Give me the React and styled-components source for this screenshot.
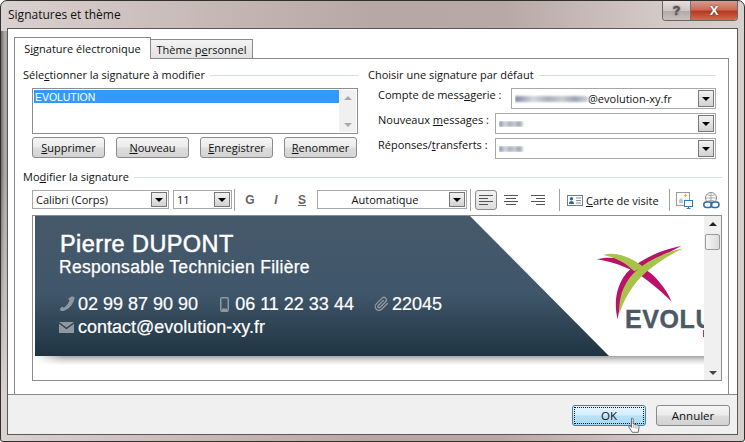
import React from "react";
import styled, { createGlobalStyle } from "styled-components";

const Global = createGlobalStyle`
  html, body { margin: 0; padding: 0; background: #fff; }
  #root { width: 745px; height: 442px; overflow: hidden; }
  * { box-sizing: border-box; }
`;

const Frame = styled.div`
  position: relative;
  width: 745px;
  height: 442px;
  display: flex;
  flex-direction: column;
  padding: 0 6px 6px 6px;
  border: 1px solid #30302e;
  border-radius: 7px 7px 3px 3px;
  background: linear-gradient(90deg, #d9d2d0 0%, #c6b8b5 28%, #b8a8a5 50%, #b9a9a6 68%, #d2c8c6 88%, #d6d0ce 100%);
  font-family: "Open Sans", "Noto Sans", sans-serif;
  font-size: 11px;
  color: #111;
  &::before {
    content: "";
    position: absolute;
    left: 0;
    top: 30px;
    width: 6px;
    height: 360px;
    background: linear-gradient(90deg, #6d6b6b, #b0abaa 60%, #a8a0a0);
    -webkit-mask-image: linear-gradient(180deg, #000 40%, transparent);
    mask-image: linear-gradient(180deg, #000 40%, transparent);
  }
`;

const TitleBar = styled.div`
  height: 27px;
  flex: none;
  display: flex;
  justify-content: space-between;
  align-items: flex-start;
`;

const Title = styled.div`
  padding: 6px 0 0 1px;
  font-size: 12px;
  line-height: 16px;
  color: #111;
`;

const Caption = styled.div`
  display: flex;
  height: 20px;
  border: 1px solid #6d6563;
  border-top: none;
  border-radius: 0 0 4px 4px;
  overflow: hidden;
`;

const CaptionBtn = styled.div`
  width: ${(p) => p.$w}px;
  height: 19px;
  display: flex;
  align-items: center;
  justify-content: center;
  background: ${(p) =>
    p.$close
      ? "linear-gradient(180deg, #d59c90 0%, #cf6a55 45%, #b93a22 55%, #cf6a52 100%)"
      : "linear-gradient(180deg, #e6dedc 0%, #cfc6c4 50%, #b5aaa8 55%, #c9c0be 100%)"};
  border-right: ${(p) => (p.$close ? "none" : "1px solid #7a7270")};
  color: ${(p) => (p.$close ? "#fff" : "#555")};
  font: bold 13px "Liberation Sans", sans-serif;
  text-shadow: 0 0 2px #333;
`;

const Client = styled.div`
  flex: 1;
  display: flex;
  flex-direction: column;
  background: #fff;
  border: 1px solid #5b5756;
`;

const Main = styled.div`
  height: 365px;
  flex: none;
  padding: 8px 0 0 6px;
  display: flex;
  flex-direction: column;
`;

const TabRow = styled.div`
  height: 22px;
  flex: none;
  display: flex;
  align-items: flex-end;
  position: relative;
  z-index: 1;
`;

const Tab = styled.div`
  width: ${(p) => p.$w}px;
  height: ${(p) => (p.$active ? 22 : 20)}px;
  flex: none;
  display: flex;
  align-items: center;
  justify-content: center;
  border: 1px solid #8a8a8a;
  border-left: ${(p) => (p.$active ? "1px solid #8a8a8a" : "none")};
  border-bottom: ${(p) => (p.$active ? "none" : "1px solid #8a8a8a")};
  background: ${(p) => (p.$active ? "#fff" : "linear-gradient(180deg, #f3f3f3, #e2e2e2)")};
  padding-bottom: ${(p) => (p.$active ? 1 : 0)}px;
`;

const Panel = styled.div`
  width: 715px;
  height: 336px;
  margin-top: -1px;
  padding: 8px 0 0 8px;
  border: 1px solid #8a8a8a;
  border-bottom: none;
  display: flex;
  flex-direction: column;
`;

const TopGroups = styled.div`
  display: flex;
  gap: 9px;
`;

const Group = styled.div`
  width: ${(p) => p.$w}px;
  flex: none;
`;

const GroupHead = styled.div`
  height: 16px;
  display: flex;
  align-items: center;
  gap: 5px;
  line-height: 16px;
  white-space: nowrap;
  &::after {
    content: "";
    flex: 1;
    height: 1px;
    background: #d6dfe6;
  }
`;

const Key = styled.span`
  text-decoration: underline;
  text-underline-offset: 1px;
`;

const ListBox = styled.div`
  width: 326px;
  height: 46px;
  margin: 5px 0 0 9px;
  padding: 1px;
  display: flex;
  border: 1px solid #8c8c8c;
  background: #fff;
`;

const ListBody = styled.div`
  flex: 1;
`;

const ListItem = styled.div`
  height: 13px;
  padding-left: 1px;
  background: #3399ff;
  color: #fff;
  line-height: 14px;
  font-family: "Liberation Sans", sans-serif;
  font-size: 10.5px;
  letter-spacing: -0.05px;
`;

const ScrollBar = styled.div`
  width: ${(p) => p.$w}px;
  flex: none;
  display: flex;
  flex-direction: column;
  justify-content: space-between;
  align-items: center;
  padding: 6px 0 5px;
  background: #f0f0f0;
  position: relative;
`;

const ScrollArrow = styled.div`
  width: 0;
  height: 0;
  border-left: 4px solid transparent;
  border-right: 4px solid transparent;
  ${(p) =>
    p.$up
      ? `border-bottom: 4px solid ${p.$c};`
      : `border-top: 4px solid ${p.$c};`}
`;

const Thumb = styled.div`
  position: absolute;
  left: 1px;
  top: 18px;
  width: 15px;
  height: 16px;
  border: 1px solid #9a9a9a;
  border-radius: 2px;
  background: linear-gradient(90deg, #f4f4f4, #dcdcdc);
`;

const ButtonRow = styled.div`
  display: flex;
  gap: 11px;
  margin: 3px 0 0 9px;
`;

const PushButton = styled.div`
  width: 73px;
  height: 21px;
  display: flex;
  align-items: center;
  justify-content: center;
  border: 1px solid #8a8a8a;
  border-radius: 3px;
  background: linear-gradient(180deg, #f6f6f6 0%, #ececec 45%, #dcdcdc 55%, #d4d4d4 100%);
  line-height: 16px;
`;

const Fields = styled.div`
  margin-top: 5px;
  padding-left: 10px;
  display: flex;
  flex-direction: column;
  gap: 4px;
`;

const FieldRow = styled.div`
  height: 21px;
  display: flex;
  justify-content: space-between;
`;

const FieldLabel = styled.div`
  line-height: 14px;
  white-space: nowrap;
`;

const Combo = styled.div`
  width: ${(p) => p.$w}px;
  height: ${(p) => p.$h || 21}px;
  margin-left: ${(p) => p.$ml || 0}px;
  flex: none;
  display: flex;
  align-items: center;
  border: 1px solid #a8a8a8;
  background: #fff;
  padding-left: 3px;
`;

const ComboText = styled.div`
  flex: 1;
  display: flex;
  align-items: center;
  justify-content: ${(p) => (p.$center ? "center" : "flex-start")};
  white-space: nowrap;
  overflow: hidden;
`;

const ComboArrow = styled.div`
  width: 16px;
  height: calc(100% - 2px);
  flex: none;
  margin-right: 1px;
  display: flex;
  align-items: center;
  justify-content: center;
  border: 1px solid #777;
  background: linear-gradient(180deg, #f2f2f2, #d2d2d2);
  &::after {
    content: "";
    border-left: 4px solid transparent;
    border-right: 4px solid transparent;
    border-top: 4px solid #000;
  }
`;

const Blur = styled.span`
  display: inline-block;
  width: ${(p) => p.$w}px;
  height: 6px;
  flex: none;
  filter: blur(1px);
  background: linear-gradient(90deg, #7f8aa0 0%, #d4d8de 25%, #aab0bc 45%, #c8ccd2 65%, #9aa4b4 82%, #d0d4da 100%);
`;

const EditSection = styled.div`
  width: 699px;
  margin-top: 10px;
`;

const Toolbar = styled.div`
  height: 20px;
  margin: 5px 0 0 9px;
  display: flex;
  align-items: flex-start;
`;

const Sep = styled.div`
  width: 1px;
  height: 22px;
  margin: -1px ${(p) => p.$r}px 0 ${(p) => p.$l}px;
  flex: none;
  background: #a2a2a2;
`;

const FormatBtn = styled.div`
  width: ${(p) => p.$w || 26}px;
  height: 20px;
  flex: none;
  display: flex;
  align-items: center;
  justify-content: center;
  font-family: "Liberation Sans", sans-serif;
  font-size: 12px;
  font-weight: bold;
  color: #666;
  font-style: ${(p) => (p.$italic ? "italic" : "normal")};
  text-decoration: ${(p) => (p.$under ? "underline" : "none")};
  margin-right: ${(p) => p.$mr || 0}px;
  ${(p) =>
    p.$on &&
    `border: 1px solid #8c8c8c; border-radius: 3px; background: linear-gradient(180deg,#f2f2f2,#dedede);`}
`;

const CardLink = styled.div`
  display: flex;
  align-items: center;
  gap: 3px;
  height: 20px;
  white-space: nowrap;
`;

const Editor = styled.div`
  width: 690px;
  height: 166px;
  margin: 5px 0 0 9px;
  border: 1px solid #8c8c8c;
  display: flex;
  background: #fff;
`;

const Canvas = styled.div`
  position: relative;
  width: 671px;
  flex: none;
  overflow: hidden;
  padding-left: 2px;
`;

const Banner = styled.div`
  width: 574px;
  height: 140px;
  padding: 15px 0 0 25px;
  background: linear-gradient(180deg, #46596a 0%, #40566a 55%, #1f3442 100%);
  clip-path: polygon(0 0, 435px 0, 574px 140px, 0 140px);
  color: #fff;
  font-family: "Liberation Sans", Arial, sans-serif;
`;

const Name = styled.div`
  font-size: 23.5px;
  line-height: 27px;
  letter-spacing: 0.4px;
  -webkit-text-stroke: 0.5px #fff;
`;

const Role = styled.div`
  font-size: 17.5px;
  line-height: 19px;
  letter-spacing: 0.3px;
  margin-left: -1px;
  -webkit-text-stroke: 0.25px #fff;
`;

const ContactRow = styled.div`
  display: flex;
  align-items: center;
  height: 22px;
  margin-left: -1px;
  margin-top: ${(p) => p.$mt}px;
  font-size: 18px;
  -webkit-text-stroke: 0.2px #fff;
`;

const Contact = styled.span`
  display: inline-flex;
  align-items: center;
  gap: ${(p) => p.$gap}px;
  margin-right: ${(p) => p.$mr || 0}px;
  white-space: nowrap;
`;

const Shadow = styled.div`
  height: 9px;
  background: linear-gradient(180deg, #a4a4a4 0%, #d8d8d8 45%, #fff 100%);
  -webkit-mask-image: linear-gradient(90deg, transparent 0, #000 28px);
  mask-image: linear-gradient(90deg, transparent 0, #000 28px);
`;

const LogoMark = styled.svg`
  position: absolute;
  left: 547px;
  top: 14px;
  width: 140px;
  height: 110px;
`;

const LogoWord = styled.div`
  position: absolute;
  left: 592px;
  top: 89px;
  font: bold 25px/28px "Liberation Sans", Arial, sans-serif;
  letter-spacing: 0.6px;
  -webkit-text-stroke: 0.4px #4b5a65;
  color: #4b5a65;
  white-space: nowrap;
`;

const LogoSpeck = styled.div`
  position: absolute;
  right: 0;
  top: 114px;
  width: 1px;
  height: 7px;
  background: #b5307a;
`;

const Footer = styled.div`
  flex: 1;
  display: flex;
  justify-content: flex-end;
  align-items: flex-start;
  gap: 10px;
  padding: 10px 7px 0 0;
  background: #f0f0f0;
  border-top: 1px solid #8a8a8a;
  font-size: 11.5px;
`;

const DialogButton = styled.div`
  position: relative;
  width: 74px;
  height: 21px;
  display: flex;
  align-items: center;
  justify-content: center;
  border-radius: 3px;
  border: 1px solid ${(p) => (p.$primary ? "#3c7fb1" : "#8a8a8a")};
  background: ${(p) =>
    p.$primary
      ? "linear-gradient(180deg, #e8f6fd 0%, #d4eefc 45%, #b8e1f8 55%, #a6d9f4 100%)"
      : "linear-gradient(180deg, #f6f6f6 0%, #ececec 45%, #dcdcdc 55%, #d2d2d2 100%)"};
  ${(p) =>
    p.$primary &&
    `&::before { content: ""; position: absolute; inset: 1px; border: 1px dotted #111; border-radius: 1px; }`}
`;

const HandCursor = styled.svg`
  position: absolute;
  left: 55px;
  top: 11px;
  width: 12px;
  height: 17px;
`;

function Phone() {
  return (
    <svg width="16" height="16" viewBox="0 0 16 16">
      <path d="M14.6 .8c.6 0 1 .5.9 1.2-.7 5.6-5 11-11 13-.8.2-1.6.2-2.6-.3C1 14 .7 13.4 1 12.9l1.5-1.9c.3-.3.7-.3 1.1 0l1.2.7c2.6-1.7 4.8-4.5 5.8-7.4l-1-1c-.3-.3-.3-.7-.1-1.1L11.9 .9c.3-.3.6-.4 1-.4z" fill="#8f989f" />
    </svg>
  );
}

function Mobile() {
  return (
    <svg width="9" height="15" viewBox="0 0 9 15">
      <rect x="0.75" y="0.75" width="7.5" height="13.5" rx="1.2" fill="none" stroke="#8f989f" strokeWidth="1.5" />
      <rect x="2" y="11.5" width="5" height="2.5" fill="#8f989f" />
    </svg>
  );
}

function Clip() {
  return (
    <svg width="15" height="16" viewBox="0 0 24 24" fill="none" stroke="#8f989f" strokeWidth="2.2" strokeLinecap="round" strokeLinejoin="round">
      <path d="M21.4 11.1l-9.2 9.2a6 6 0 0 1-8.5-8.5l9.2-9.2a4 4 0 0 1 5.7 5.7l-9.2 9.2a2 2 0 0 1-2.8-2.8l8.5-8.5" />
    </svg>
  );
}

function Mail() {
  return (
    <svg width="15" height="11" viewBox="0 0 15 11">
      <path d="M0 0h15L7.5 5.5z" fill="#8f989f" />
      <path d="M0 1.8l7.5 5.4L15 1.8V11H0z" fill="#8f989f" />
    </svg>
  );
}

function AlignIcon({ widths }) {
  return (
    <svg width="18" height="12" viewBox="0 0 18 12" stroke="#555" strokeWidth="1">
      {widths.map(([a, b], i) => (
        <line key={i} x1={a} x2={b} y1={1.5 + i * 3} y2={1.5 + i * 3} />
      ))}
    </svg>
  );
}

function CardIcon() {
  return (
    <svg width="16" height="11" viewBox="0 0 16 11">
      <rect x="0.5" y="0.5" width="15" height="10" fill="#fff" stroke="#6f7f92" />
      <circle cx="4.5" cy="3.8" r="1.7" fill="#2f66a8" />
      <path d="M2 9c0-2.2 1-3 2.5-3S7 6.8 7 9z" fill="#2f66a8" />
      <path d="M9 3h5M9 5.5h5M9 8h5" stroke="#8b8b8b" />
    </svg>
  );
}

function PictureIcon() {
  return (
    <svg width="17" height="17" viewBox="0 0 17 17">
      <rect x="0.5" y="0.5" width="13" height="13" fill="#fafafa" stroke="#9a9a9a" />
      <path d="M3 11V8l2-2 2 2v3z" fill="#b9c8d8" />
      <path d="M9.5 1.5l.7 1.3 1.3.7-1.3.7-.7 1.3-.7-1.3-1.3-.7 1.3-.7z" fill="#f0a94a" />
      <rect x="8.5" y="8.5" width="8" height="6" fill="#fff" stroke="#2f7ab8" />
      <path d="M12.5 14.500v2M10.500 16.500h4" stroke="#2f7ab8" />
    </svg>
  );
}

function LinkIcon() {
  return (
    <svg width="17" height="17" viewBox="0 0 17 17" fill="none">
      <circle cx="8" cy="6" r="5.5" stroke="#8a8a8a" />
      <path d="M8 .5v11M2.500 6h11M4 2.500c2.500 1.500 5.500 1.500 8 0M4 9.500c2.500-1.500 5.500-1.500 8 0" stroke="#9a9a9a" strokeWidth=".8" />
      <rect x="0.8" y="10" width="8" height="5.5" rx="2.7" fill="#fff" stroke="#2c6ca8" strokeWidth="1.5" />
      <rect x="8" y="10" width="8" height="5.5" rx="2.7" fill="none" stroke="#2c6ca8" strokeWidth="1.5" />
    </svg>
  );
}

export default function App() {
  return (
    <>
      <Global />
      <Frame>
        <TitleBar>
          <Title>Signatures et thème</Title>
          <Caption>
            <CaptionBtn $w={28}>?</CaptionBtn>
            <CaptionBtn $w={46} $close>
              X
            </CaptionBtn>
          </Caption>
        </TitleBar>
        <Client>
          <Main>
            <TabRow>
              <Tab $w={137} $active>
                <span>
                  S<Key>i</Key>gnature électronique
                </span>
              </Tab>
              <Tab $w={102}>
                <span>
                  Thème p<Key>e</Key>rsonnel
                </span>
              </Tab>
            </TabRow>
            <Panel>
              <TopGroups>
                <Group $w={336}>
                  <GroupHead>
                    <span>
                      Séle<Key>c</Key>tionner la signature à modifier
                    </span>
                  </GroupHead>
                  <ListBox>
                    <ListBody>
                      <ListItem>EVOLUTION</ListItem>
                    </ListBody>
                    <ScrollBar $w={17}>
                      <ScrollArrow $up $c="#aaa" />
                      <ScrollArrow $c="#aaa" />
                    </ScrollBar>
                  </ListBox>
                  <ButtonRow>
                    <PushButton>
                      <span>
                        <Key>S</Key>upprimer
                      </span>
                    </PushButton>
                    <PushButton>
                      <span>
                        <Key>N</Key>ouveau
                      </span>
                    </PushButton>
                    <PushButton>
                      <span>
                        <Key>E</Key>nregistrer
                      </span>
                    </PushButton>
                    <PushButton>
                      <span>
                        <Key>R</Key>enommer
                      </span>
                    </PushButton>
                  </ButtonRow>
                </Group>
                <Group $w={348}>
                  <GroupHead>
                    <span>Choisir une signature par défaut</span>
                  </GroupHead>
                  <Fields>
                    <FieldRow>
                      <FieldLabel>
                        Compte de mess<Key>a</Key>gerie :
                      </FieldLabel>
                      <Combo $w={205}>
                        <ComboText>
                          <Blur $w={73} />
                          <span>@evolution-xy.fr</span>
                        </ComboText>
                        <ComboArrow />
                      </Combo>
                    </FieldRow>
                    <FieldRow>
                      <FieldLabel>
                        Nouveaux <Key>m</Key>essages :
                      </FieldLabel>
                      <Combo $w={221}>
                        <ComboText>
                          <Blur $w={24} />
                        </ComboText>
                        <ComboArrow />
                      </Combo>
                    </FieldRow>
                    <FieldRow>
                      <FieldLabel>
                        Réponses/<Key>t</Key>ransferts :
                      </FieldLabel>
                      <Combo $w={221}>
                        <ComboText>
                          <Blur $w={24} />
                        </ComboText>
                        <ComboArrow />
                      </Combo>
                    </FieldRow>
                  </Fields>
                </Group>
              </TopGroups>
              <EditSection>
                <GroupHead>
                  <span>
                    Mo<Key>d</Key>ifier la signature
                  </span>
                </GroupHead>
                <Toolbar>
                  <Combo $w={137} $h={19}>
                    <ComboText>Calibri (Corps)</ComboText>
                    <ComboArrow />
                  </Combo>
                  <Combo $w={59} $h={19} $ml={4}>
                    <ComboText>11</ComboText>
                    <ComboArrow />
                  </Combo>
                  <Sep $l={2} $r={2} />
                  <FormatBtn>G</FormatBtn>
                  <FormatBtn $italic>I</FormatBtn>
                  <FormatBtn $under $mr={2}>S</FormatBtn>
                  <Combo $w={150} $h={19}>
                    <ComboText $center>Automatique</ComboText>
                    <ComboArrow />
                  </Combo>
                  <Sep $l={3} $r={4} />
                  <FormatBtn $w={22} $on $mr={3}>
                    <AlignIcon widths={[[2, 16], [2, 11], [2, 16], [2, 11]]} />
                  </FormatBtn>
                  <FormatBtn $w={22} $mr={5}>
                    <AlignIcon widths={[[2, 16], [4, 14], [2, 16], [4, 14]]} />
                  </FormatBtn>
                  <FormatBtn $w={22}>
                    <AlignIcon widths={[[2, 16], [7, 16], [2, 16], [7, 16]]} />
                  </FormatBtn>
                  <Sep $l={10} $r={7} />
                  <CardLink>
                    <CardIcon />
                    <span>
                      <Key>C</Key>arte de visite
                    </span>
                  </CardLink>
                  <Sep $l={10} $r={6} />
                  <FormatBtn $w={18} $mr={9}>
                    <PictureIcon />
                  </FormatBtn>
                  <FormatBtn $w={18}>
                    <LinkIcon />
                  </FormatBtn>
                </Toolbar>
                <Editor>
                  <Canvas>
                    <Banner>
                      <Name>Pierre DUPONT</Name>
                      <Role>Responsable Technicien Filière</Role>
                      <ContactRow $mt={16}>
                        <Contact $gap={3} $mr={22}>
                          <Phone />
                          02 99 87 90 90
                        </Contact>
                        <Contact $gap={6} $mr={20}>
                          <Mobile />
                          06 11 22 33 44
                        </Contact>
                        <Contact $gap={3}>
                          <Clip />
                          22045
                        </Contact>
                      </ContactRow>
                      <ContactRow $mt={1}>
                        <Contact $gap={4}>
                          <Mail />
                          contact@evolution-xy.fr
                        </Contact>
                      </ContactRow>
                    </Banner>
                    <Shadow />
                    <LogoMark viewBox="0 0 420 330">
                      <path d="M50 88C100 74 165 92 215 132C242 156 264 188 275 215C250 190 222 165 180 135C140 110 95 95 50 88Z" fill="#b8126a" />
                      <path d="M305 47C240 60 180 88 140 128C110 165 100 215 113 268C120 215 138 178 172 138C207 102 255 72 305 47Z" fill="#b8126a" />
                      <path d="M70 75C105 64 150 80 190 110L163 124C135 97 105 82 70 75Z" fill="#a9c34a" />
                      <path d="M310 55C240 70 178 105 148 145C126 175 116 210 118 252C132 208 158 162 198 127C232 97 270 74 310 55Z" fill="#a9c34a" />
                    </LogoMark>
                    <LogoWord>EVOLUTION</LogoWord>
                    <LogoSpeck />
                  </Canvas>
                  <ScrollBar $w={17}>
                    <ScrollArrow $up $c="#222" />
                    <Thumb />
                    <ScrollArrow $c="#444" />
                  </ScrollBar>
                </Editor>
              </EditSection>
            </Panel>
          </Main>
          <Footer>
            <DialogButton $primary>
              OK
              <HandCursor viewBox="0 0 14 20">
                <path d="M4 1.5c1-.8 2 0 2 1V8l5 1.5c1.500.5 2 1.500 1.800 3L12 18H5L1 12c-.6-1 .7-2 1.700-1.200L4 12z" fill="#fff" stroke="#555" strokeWidth="1" strokeLinejoin="round" />
                <path d="M6.500 9v4M8.500 9.500v4M10.500 10v4" stroke="#888" strokeWidth=".7" />
              </HandCursor>
            </DialogButton>
            <DialogButton>Annuler</DialogButton>
          </Footer>
        </Client>
      </Frame>
    </>
  );
}
